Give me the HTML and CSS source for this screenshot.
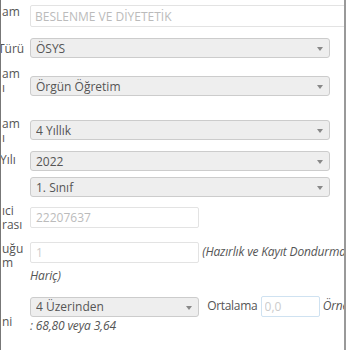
FILE: index.html
```html
<!DOCTYPE html>
<html lang="tr">
<head>
    <meta charset="UTF-8">
    <title>Öğrenci Bilgileri</title>
    <link rel="stylesheet" href="styles.css">
</head>
<body>
    <div class="frame">
        <div class="form">
            <div class="row row-program">
                <div class="label">am</div>
                <div class="field"><input class="text wide" value="BESLENME VE DİYETETİK" readonly></div>
            </div>
            <div class="row row-type">
                <div class="label cut">Türü</div>
                <div class="field">
                    <div class="select"><select><option>ÖSYS</option></select></div>
                </div>
            </div>
            <div class="row row-mode">
                <div class="label">am<br>ı</div>
                <div class="field">
                    <div class="select"><select><option>Örgün Öğretim</option></select></div>
                </div>
            </div>
            <div class="row row-length">
                <div class="label">am<br>ı</div>
                <div class="field">
                    <div class="select"><select><option>4 Yıllık</option></select></div>
                </div>
            </div>
            <div class="row row-year">
                <div class="label cut-small">Yılı</div>
                <div class="field">
                    <div class="select"><select><option>2022</option></select></div>
                </div>
            </div>
            <div class="row row-class">
                <div class="label"></div>
                <div class="field">
                    <div class="select"><select><option>1. Sınıf</option></select></div>
                </div>
            </div>
            <div class="row row-number">
                <div class="label">ıci<br>rası</div>
                <div class="field"><input class="text half" value="22207637" readonly></div>
            </div>
            <div class="row row-term">
                <div class="label">uğu<br>m</div>
                <div class="field flow">
                    <input class="text half" placeholder="1">
                    <i class="hint">(Hazırlık ve Kayıt Dondurma Hariç)</i>
                </div>
            </div>
            <div class="row row-gpa">
                <div class="label">ni</div>
                <div class="field flow">
                    <div class="select half"><select><option>4 Üzerinden</option></select></div>
                    <span class="caption">Ortalama</span>
                    <input class="text small blue" placeholder="0,0">
                    <i class="hint">Örnek : 68,80 veya 3,64</i>
                </div>
            </div>
        </div>
    </div>
</body>
</html>
```

FILE: styles.css
```css
body {
    margin: 0;
    background: #fff;
    font-family: 'Open Sans', 'Noto Sans', Arial, sans-serif;
    font-size: 12px;
    color: #555;
}
.frame {
    width: 343px;
    height: 350px;
    border-left: 1px solid #777;
    border-right: 2px solid #999;
    overflow: hidden;
}
.form {
    width: 359px;
    padding-top: 5px;
}
.row {
    display: grid;
    grid-template-columns: 29px 328px;
    align-items: start;
}
/* labels hang beside the field and never change the row height */
.label {
    height: 0;
    white-space: nowrap;
    line-height: 14px;
    padding-left: 1px;
}
.label.cut { text-indent: -4px; }
.label.cut-small { text-indent: -2px; }

.row-type { margin-top: 11px; }
.row-type .label { margin-top: 4px; }
.row-mode { margin-top: 18px; }
.row-mode .label { margin-top: -9px; }
.row-length { margin-top: 24px; }
.row-length .label { margin-top: -3px; }
.row-year { margin-top: 11px; }
.row-year .label { margin-top: 2px; }
.row-class { margin-top: 6px; }
.row-number { margin-top: 10px; }
.row-number .label { margin-top: -3px; }
.row-term { margin-top: 12px; }
.row-term .label { margin-top: 2px; }
.row-gpa { margin-top: 8px; }
.row-gpa .label { margin-top: 19px; }

.text {
    box-sizing: border-box;
    height: 21px;
    border: 1px solid #e3e3e3;
    border-radius: 2px;
    padding: 0 5px;
    font: inherit;
    color: #bbb;
    background: #fff;
    outline: none;
}
.text::placeholder { color: #ccc; }
.text.wide { width: 330px; height: 22px; padding-left: 4px; }
.text.half { width: 169px; }
.text.small { width: 59px; padding-left: 3px; }
.text.blue { border-color: #cfe2f1; }

.select {
    position: relative;
    width: 300px;
    height: 20px;
}
.select.half { width: 169px; }
.select select {
    -webkit-appearance: none;
    appearance: none;
    box-sizing: border-box;
    width: 100%;
    height: 100%;
    margin: 0;
    padding: 0 20px 0 5px;
    border: 1px solid #ccc;
    border-radius: 3px;
    background: #eee;
    font: inherit;
    color: #555;
    outline: none;
}
.select::after {
    content: '';
    position: absolute;
    right: 7px;
    top: 9px;
    border-left: 3px solid transparent;
    border-right: 3px solid transparent;
    border-top: 4px solid #888;
}

.flow .text,
.flow .select {
    display: inline-block;
    vertical-align: middle;
}
.row-term .flow { line-height: 24px; }
.row-gpa .flow { line-height: 18px; }
.hint {
    letter-spacing: -0.15px;
}
.caption {
    margin-left: 5px;
    letter-spacing: -0.3px;
}
```
